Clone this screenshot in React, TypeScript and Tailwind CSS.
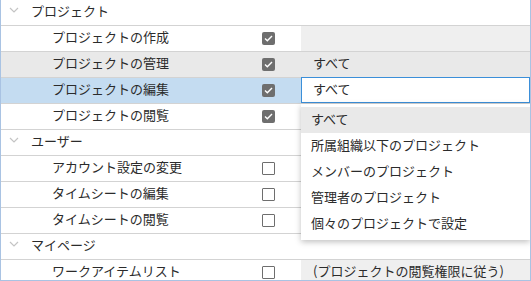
import React from "react";

type Row =
  | { kind: "group"; label: string }
  | {
      kind: "item";
      label: string;
      checked: boolean;
      value?: string;
      state?: "hover" | "selected";
      valueBg?: boolean;
    };

const ROWS: Row[] = [
  { kind: "group", label: "プロジェクト" },
  { kind: "item", label: "プロジェクトの作成", checked: true, valueBg: true },
  { kind: "item", label: "プロジェクトの管理", checked: true, value: "すべて", state: "hover" },
  { kind: "item", label: "プロジェクトの編集", checked: true, value: "すべて", state: "selected" },
  { kind: "item", label: "プロジェクトの閲覧", checked: true },
  { kind: "group", label: "ユーザー" },
  { kind: "item", label: "アカウント設定の変更", checked: false },
  { kind: "item", label: "タイムシートの編集", checked: false },
  { kind: "item", label: "タイムシートの閲覧", checked: false },
  { kind: "group", label: "マイページ" },
  {
    kind: "item",
    label: "ワークアイテムリスト",
    checked: false,
    value: "(プロジェクトの閲覧権限に従う)",
    valueBg: true,
  },
];

const OPTIONS = [
  "すべて",
  "所属組織以下のプロジェクト",
  "メンバーのプロジェクト",
  "管理者のプロジェクト",
  "個々のプロジェクトで設定",
];

function Chevron() {
  return (
    <svg width="10" height="6" viewBox="0 0 10 6" className="shrink-0 -mt-[2px]">
      <path d="M1 1l4 4 4-4" fill="none" stroke="#c4c4c4" strokeWidth="1.2" />
    </svg>
  );
}

function Check({ checked }: { checked: boolean }) {
  if (!checked)
    return <div className="w-[13px] h-[13px] border border-[#6e6e6e] rounded-[1px] bg-white" />;
  return (
    <div className="w-[13px] h-[13px] rounded-[2px] bg-[#6e6e6e] flex items-center justify-center">
      <svg width="9" height="7" viewBox="0 0 9 7">
        <path d="M1 3.6l2.3 2.2L8 1" fill="none" stroke="#fff" strokeWidth="1.4" />
      </svg>
    </div>
  );
}

export default function App() {
  return (
    <div
      className="relative w-[531px] h-[281px] overflow-hidden bg-white border-l border-r border-b border-[#a9c3e3] text-[13px] text-[#2b2b2b]"
      style={{ fontFamily: '"Noto Sans CJK JP", "Noto Sans", sans-serif' }}
    >
      {ROWS.map((r, i) =>
        r.kind === "group" ? (
          <div key={i} className="h-[26px] flex items-center border-b border-[#d3d3d3] pl-[8px] gap-[12px] pb-[3px]">
            <Chevron />
            <span>{r.label}</span>
          </div>
        ) : (
          <div
            key={i}
            className={
              "h-[26px] grid grid-cols-[235px_65px_1fr] border-b border-[#d3d3d3] " +
              (r.state === "hover" ? "bg-[#e9e9e9]" : r.state === "selected" ? "bg-[#c4dcf1]" : "")
            }
          >
            <div className="flex items-center pl-[51px] pb-[3px]">{r.label}</div>
            <div className="flex items-center justify-center">
              <Check checked={r.checked} />
            </div>
            {r.state === "selected" ? (
              <div className="flex items-center bg-white border border-[#3b8fd9] pl-[11px] pb-[2px] -mt-px">
                {r.value}
              </div>
            ) : (
              <div className={"flex items-center pl-[12px] pb-[3px] " + (r.valueBg ? "bg-[#efefef]" : "")}>
                {r.value}
              </div>
            )}
          </div>
        )
      )}

      <div className="absolute left-[300px] top-[104px] w-[229px] bg-white py-[3px] shadow-[0_2px_6px_rgba(0,0,0,0.25)]">
        {OPTIONS.map((o, i) => (
          <div
            key={o}
            className={"h-[26px] flex items-center pl-[10px] pb-[3px] " + (i === 0 ? "bg-[#e9e9e9]" : "")}
          >
            {o}
          </div>
        ))}
      </div>
    </div>
  );
}
